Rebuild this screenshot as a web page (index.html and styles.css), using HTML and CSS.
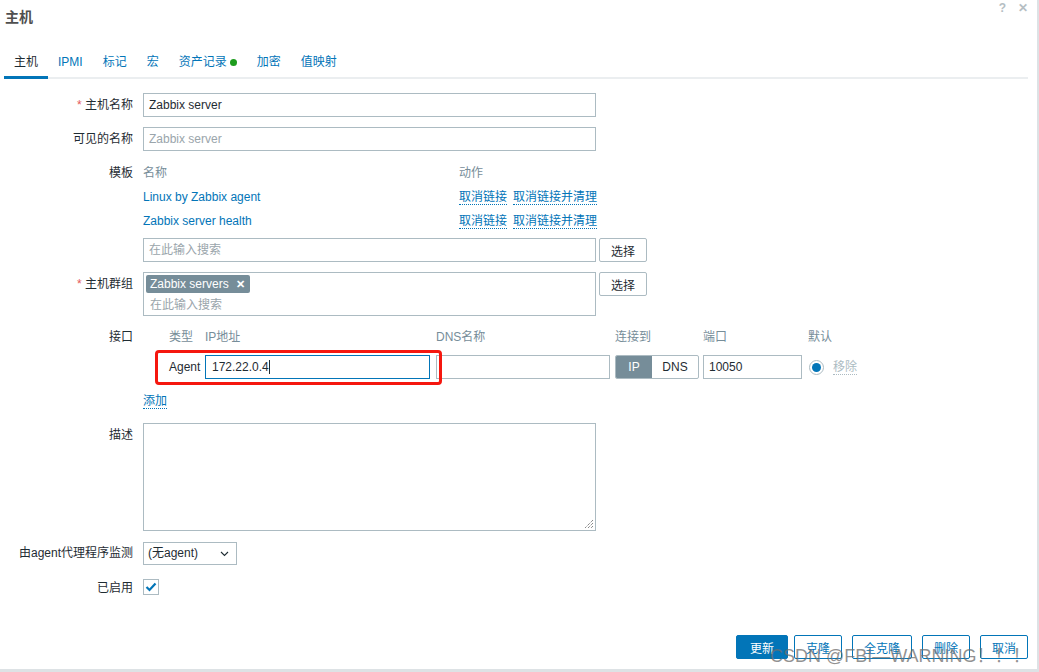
FILE: index.html
```html
<!DOCTYPE html>
<html lang="zh">
<head>
<meta charset="utf-8">
<title>主机</title>
<link rel="stylesheet" href="styles.css">
</head>
<body>
<div class="dialog">
  <div class="head">
    <h1 class="title">主机</h1>
    <div class="head-icons"><span class="q">?</span><span class="x">✕</span></div>
  </div>
  <ul class="tabs">
    <li class="tab active">主机</li>
    <li class="tab">IPMI</li>
    <li class="tab">标记</li>
    <li class="tab">宏</li>
    <li class="tab">资产记录<span class="dot"></span></li>
    <li class="tab">加密</li>
    <li class="tab">值映射</li>
  </ul>

  <div class="form">
    <div class="row r-name">
      <label class="lbl"><span class="req">*</span> 主机名称</label>
      <div class="field"><div class="input w453">Zabbix server</div></div>
    </div>
    <div class="row r-visible">
      <label class="lbl">可见的名称</label>
      <div class="field"><div class="input w453 ph">Zabbix server</div></div>
    </div>
    <div class="row r-tpl">
      <label class="lbl">模板</label>
      <div class="field">
        <div class="tpl-grid">
          <div class="th">名称</div><div class="th">动作</div>
          <div class="tname">Linux by Zabbix agent</div>
          <div class="tact"><span class="dlink">取消链接</span><span class="dlink">取消链接并清理</span></div>
          <div class="tname">Zabbix server health</div>
          <div class="tact"><span class="dlink">取消链接</span><span class="dlink">取消链接并清理</span></div>
        </div>
        <div class="with-btn">
          <div class="input w453 ph">在此输入搜索</div>
          <button class="btn-alt">选择</button>
        </div>
      </div>
    </div>
    <div class="row r-group">
      <label class="lbl"><span class="req">*</span> 主机群组</label>
      <div class="field">
        <div class="with-btn top">
          <div class="multi">
            <span class="tag">Zabbix servers <span class="tag-x">✕</span></span>
            <div class="ph ms-ph">在此输入搜索</div>
          </div>
          <button class="btn-alt">选择</button>
        </div>
      </div>
    </div>
    <div class="row r-if">
      <label class="lbl">接口</label>
      <div class="field iface">
        <div class="if-grid">
          <div></div><div class="ih">类型</div><div class="ih">IP地址</div><div class="ih">DNS名称</div><div class="ih">连接到</div><div class="ih">端口</div><div class="ih">默认</div>
          <div></div>
          <div class="itype">Agent</div>
          <div><div class="input focus w225">172.22.0.4<span class="caret"></span></div></div>
          <div><div class="input w174"></div></div>
          <div class="toggle"><span class="tg on">IP</span><span class="tg">DNS</span></div>
          <div><div class="input w99">10050</div></div>
          <div class="idef"><span class="radio"><span class="radio-in"></span></span><span class="remove">移除</span></div>
        </div>
        <div class="annot"></div>
        <div class="add"><span class="dlink">添加</span></div>
      </div>
    </div>
    <div class="row r-desc">
      <label class="lbl">描述</label>
      <div class="field"><div class="textarea"><svg class="grip" width="10" height="10" viewBox="0 0 10 10"><path d="M9 1L1 9M9 4L4 9M9 7L7 9" stroke="#555" stroke-width="1" stroke-dasharray="1 1"/></svg></div></div>
    </div>
    <div class="row r-proxy">
      <label class="lbl">由agent代理程序监测</label>
      <div class="field"><div class="select">(无agent)<svg class="chev" width="9" height="6" viewBox="0 0 9 6"><path d="M1 1l3.5 3.5L8 1" fill="none" stroke="#1f2c33" stroke-width="1.1"/></svg></div></div>
    </div>
    <div class="row r-en">
      <label class="lbl">已启用</label>
      <div class="field"><span class="check"><svg width="12" height="10" viewBox="0 0 12 10"><path d="M1.5 5l3 3L10.5 1.5" fill="none" stroke="#0275b8" stroke-width="2.2"/></svg></span></div>
    </div>
  </div>

  <div class="footer">
    <button class="btn-main">更新</button>
    <button class="btn-alt blue first">克隆</button>
    <button class="btn-alt blue wide">全克隆</button>
    <button class="btn-alt blue">删除</button>
    <button class="btn-alt blue">取消</button>
    <div class="watermark">CSDN @FBI—WARNING！！！</div>
  </div>
</div>
</body>
</html>
```

FILE: styles.css
```css
* { box-sizing: border-box; }
html, body { margin: 0; padding: 0; }
body {
  width: 1039px;
  height: 672px;
  background: #dde2e5;
  font-family: "Liberation Sans", Arial, "Noto Sans CJK SC", sans-serif;
  font-size: 12px;
  color: #1f2c33;
  overflow: hidden;
}
.dialog {
  position: relative;
  width: 1037px;
  height: 669px;
  background: #fff;
  padding: 0 9px 0 4px;
}
.head {
  display: flex;
  justify-content: space-between;
  height: 35px;
}
.title {
  margin: 8px 0 0 1px;
  font-size: 14px;
  font-weight: bold;
  color: #4f4f4f;
  line-height: 18px;
}
.head-icons {
  display: flex;
  gap: 12px;
  margin-top: 1px;
  color: #b5bec3;
  font-size: 12px;
  font-weight: bold;
  line-height: 14px;
}

.tabs {
  list-style: none;
  margin: 15px 0 0;
  padding: 0;
  display: flex;
  border-bottom: 2px solid #ebeef0;
  height: 29px;
}
.tab {
  padding: 1px 10px 0;
  line-height: 22px;
  color: #0275b8;
  position: relative;
  display: flex;
  align-items: flex-start;
}
.tab.active { color: #1f2c33; }
.tab.active::after {
  content: "";
  position: absolute;
  left: 0; right: 0; bottom: -2px;
  height: 3px;
  background: #0275b8;
}
.dot {
  display: inline-block;
  width: 7px; height: 7px;
  border-radius: 50%;
  background: #1d9c1d;
  margin: 8px 0 0 3px;
}

.form { margin-top: 14px; }
.row {
  display: grid;
  grid-template-columns: 129px 1fr;
  column-gap: 10px;
}
.lbl {
  text-align: right;
  line-height: 24px;
  white-space: nowrap;
}
.req { color: #e45959; }
.r-name { margin-bottom: 10px; }
.r-visible { margin-bottom: 10px; }
.r-tpl { margin-bottom: 10px; }
.r-group { margin-bottom: 10px; }
.r-if { margin-bottom: 15px; }
.r-desc { margin-bottom: 11px; }
.r-proxy { margin-bottom: 14px; }
.r-proxy .lbl { line-height: 23px; }
.r-en .lbl { line-height: 18px; }

.input {
  height: 24px;
  border: 1px solid #acbbc2;
  padding: 0 5px;
  line-height: 22px;
  color: #1f2c33;
  white-space: nowrap;
  overflow: hidden;
  background: #fff;
}
.w453 { width: 453px; }
.w225 { width: 225px; }
.w174 { width: 174px; }
.w99 { width: 99px; }
.ph { color: #9aa5ab; }
.input.focus { border-color: #0275b8; padding-left: 6px; }
.caret {
  display: inline-block;
  width: 1px; height: 14px;
  background: #1f2c33;
  vertical-align: -3px;
}

.tpl-grid {
  display: grid;
  grid-template-columns: 316px 160px;
  grid-template-rows: 22px 24px 24px;
  width: 453px;
  padding-top: 1px;
  margin-bottom: 6px;
}
.th { color: #768d99; line-height: 22px; }
.tname { color: #0275b8; line-height: 26px; }
.tact { display: flex; gap: 6px; align-items: center; white-space: nowrap; padding-top: 2px; }
.dlink {
  color: #0275b8;
  border-bottom: 1px dotted #0275b8;
  line-height: 14px;
  white-space: nowrap;
}
.with-btn { display: flex; gap: 3px; align-items: flex-start; }
.btn-alt {
  font-family: inherit;
  font-size: 12px;
  height: 24px;
  width: 48px;
  padding: 0;
  background: #fff;
  border: 1px solid #acbbc2;
  border-radius: 2px;
  color: #1f2c33;
  cursor: pointer;
}
.multi {
  width: 453px;
  height: 44px;
  border: 1px solid #acbbc2;
  padding: 2px 2px 0;
}
.tag {
  display: inline-block;
  height: 18px;
  line-height: 18px;
  background: #768d99;
  color: #fff;
  border-radius: 2px;
  padding: 0 5px 0 4px;
  font-size: 12px;
}
.tag-x { font-weight: bold; margin-left: 4px; font-size: 11px; }
.ms-ph { line-height: 20px; padding-left: 4px; margin-top: 2px; }

.iface { position: relative; }
.if-grid {
  display: grid;
  grid-template-columns: 26px 36px 231px 179px 88px 105px auto;
  grid-template-rows: 22px 24px;
  row-gap: 7px;
}
.ih { color: #768d99; line-height: 22px; }
.r-if .lbl { line-height: 22px; }
.itype { line-height: 24px; }
.toggle {
  display: flex;
  width: 84px;
  height: 24px;
  border: 1px solid #acbbc2;
  border-radius: 2px;
  overflow: hidden;
}
.tg { flex: 1; text-align: center; line-height: 22px; }
.tg.on { background: #768d99; color: #fff; flex: 0 0 36px; }
.idef { display: flex; align-items: center; gap: 9px; padding-left: 1px; }
.radio {
  width: 15px; height: 15px;
  border-radius: 50%;
  border: 1px solid #acbbc2;
  display: flex; align-items: center; justify-content: center;
}
.radio-in { width: 9px; height: 9px; border-radius: 50%; background: #0275b8; }
.remove {
  color: #acbbc2;
  border-bottom: 1px dotted #acbbc2;
  line-height: 14px;
}
.annot {
  position: absolute;
  left: 12px;
  top: 24px;
  width: 287px;
  height: 35px;
  border: 3px solid #f5170f;
  border-radius: 4px;
  pointer-events: none;
}
.add { margin-top: 15px; line-height: 14px; }

.textarea {
  position: relative;
  width: 453px;
  height: 108px;
  border: 1px solid #acbbc2;
}
.grip { position: absolute; right: 1px; bottom: 1px; }
.select {
  position: relative;
  width: 94px;
  height: 23px;
  border: 1px solid #acbbc2;
  line-height: 21px;
  padding-left: 4px;
}
.chev { position: absolute; right: 7px; top: 8px; }
.check {
  display: flex; align-items: center; justify-content: center;
  width: 16px; height: 16px;
  border: 1px solid #acbbc2;
}

.footer {
  position: absolute;
  left: 0; right: 0;
  top: 635px;
  display: flex;
  justify-content: flex-end;
  gap: 10px;
  padding-right: 9px;
}
.btn-main {
  font-family: inherit;
  font-size: 12px;
  height: 24px;
  width: 52px;
  background: #0275b8;
  color: #fff;
  border: 1px solid #0275b8;
  border-radius: 2px;
}
.btn-alt.blue {
  border-color: #0275b8;
  color: #0275b8;
}
.btn-alt.wide { width: 60px; }
.btn-alt.first { margin-left: -4px; }
.watermark {
  position: absolute;
  left: 770px;
  top: 6px;
  font-size: 18px;
  color: rgba(110, 110, 110, 0.75);
  white-space: nowrap;
  pointer-events: none;
}
```
